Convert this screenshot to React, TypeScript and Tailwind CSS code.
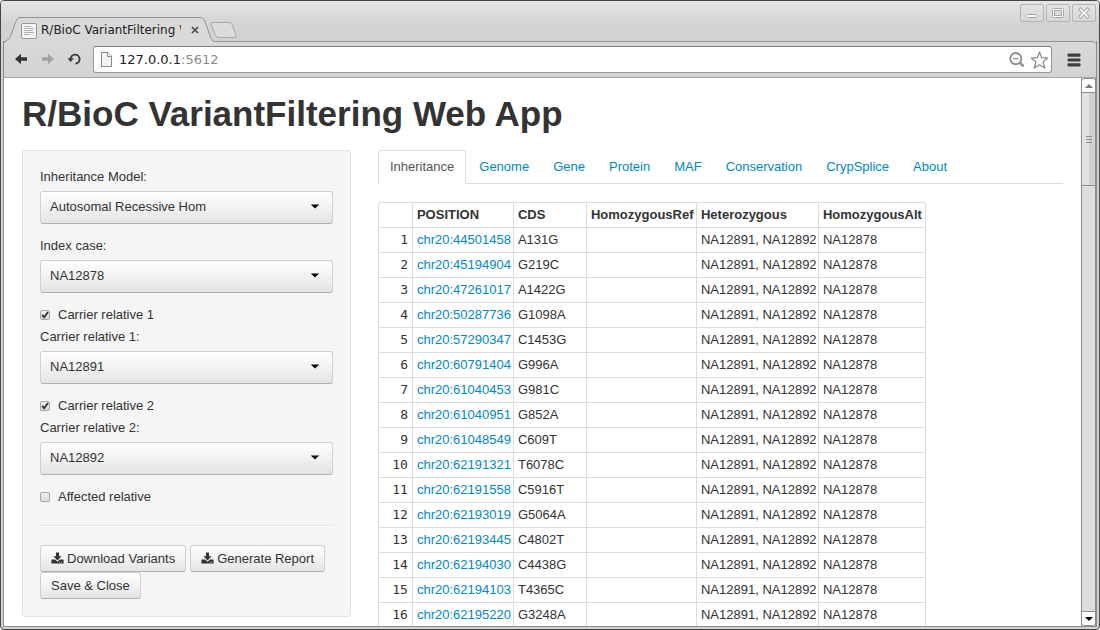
import { useState } from "react";
import type { ReactNode } from "react";

const positions: [string, string][] = [
  ["chr20:44501458", "A131G"],
  ["chr20:45194904", "G219C"],
  ["chr20:47261017", "A1422G"],
  ["chr20:50287736", "G1098A"],
  ["chr20:57290347", "C1453G"],
  ["chr20:60791404", "G996A"],
  ["chr20:61040453", "G981C"],
  ["chr20:61040951", "G852A"],
  ["chr20:61048549", "C609T"],
  ["chr20:62191321", "T6078C"],
  ["chr20:62191558", "C5916T"],
  ["chr20:62193019", "G5064A"],
  ["chr20:62193445", "C4802T"],
  ["chr20:62194030", "C4438G"],
  ["chr20:62194103", "T4365C"],
  ["chr20:62195220", "G3248A"],
];

const tabs = ["Inheritance", "Genome", "Gene", "Protein", "MAF", "Conservation", "CrypSplice", "About"];
const individuals = ["NA12878", "NA12891", "NA12892"];

function WindowButton({ label, children }: { label: string; children: ReactNode }) {
  return (
    <button
      type="button"
      aria-label={label}
      className="flex h-[18px] w-6 items-center justify-center rounded-xs border border-[#b4b4b4] bg-linear-to-b from-[#e4e4e4] to-[#d6d6d6]"
    >
      <svg width="14" height="12" viewBox="0 0 14 12" fill="none">
        {children}
      </svg>
    </button>
  );
}

function TitleBar() {
  return (
    <header className="flex h-10 shrink-0 items-start justify-between bg-linear-to-b from-[#e6e6e6] to-[#d2d2d2] to-60%">
      <div className="flex self-end">
        <div className="relative z-10 -mb-px flex h-[25px] w-[213px] items-center pl-[17px]">
          <svg className="absolute inset-0" width="213" height="26" viewBox="0 0 213 26">
            <path
              d="M0.5 26 C1.5 22.5 5 23.5 6.5 19.5 L11.5 5.5 C12.8 2 14 0.5 17 0.5 L195.5 0.5 C198.5 0.5 200 2 201.2 5 L206 19 C207.5 23 208.5 24.5 212 24.5 L213 26 Z"
              fill="#d9d9d9"
            />
            <path
              d="M0.5 26 C1.5 22.5 5 23.5 6.5 19.5 L11.5 5.5 C12.8 2 14 0.5 17 0.5 L195.5 0.5 C198.5 0.5 200 2 201.2 5 L206 19 C207.5 23 208.5 24.5 212 24.5 H213"
              fill="none"
              stroke="#949494"
            />
          </svg>
          <svg className="relative mt-0.5 shrink-0" width="16" height="16" viewBox="0 0 16 16">
            <rect x="0.5" y="0.5" width="15" height="15" rx="1.5" fill="#f4f4f4" stroke="#989898" />
            <path d="M3 3.5h7M3 5.5h10M3 7.5h9M3 9.5h10M3 11.5h6" stroke="#b4b4b4" />
          </svg>
          <span className="relative ml-1 w-[140px] overflow-hidden font-['DejaVu_Sans',sans-serif] text-[12px] leading-5 whitespace-nowrap text-[#222]">
            R/BioC VariantFiltering Web App
          </span>
          <button type="button" aria-label="Close tab" className="relative ml-2 flex size-3 items-center justify-center">
            <svg width="8" height="8" viewBox="0 0 8 8">
              <path d="M1 1l6 6M7 1l-6 6" stroke="#4c4c4c" strokeWidth="1.7" />
            </svg>
          </button>
        </div>
        <button type="button" aria-label="New tab" className="mt-[5px] -ml-[7px] flex items-start">
          <svg width="28" height="18" viewBox="0 0 28 18">
            <path
              d="M2.5 0.5 H19 Q21 0.5 22 2.5 L26 13 Q26.8 15.5 24.5 15.5 H9 Q6.5 15.5 5.6 13.5 L1.2 3 Q0.2 0.5 2.5 0.5Z"
              fill="#dcdcdc"
              stroke="#a8a8a8"
            />
          </svg>
        </button>
      </div>
      <div className="flex gap-0.5 pt-[3px]">
        <WindowButton label="Minimise">
          <rect x="1.5" y="7.5" width="10" height="3" rx="1" fill="#fff" stroke="#a6a6a6" />
        </WindowButton>
        <WindowButton label="Maximise">
          <rect x="1.5" y="1.5" width="11" height="9" rx="1" fill="#fff" stroke="#a6a6a6" />
          <rect x="3.5" y="3.5" width="7" height="5" fill="#ddd" stroke="#a6a6a6" />
        </WindowButton>
        <WindowButton label="Close">
          <path d="M3.5 2.5l7 7M10.5 2.5l-7 7" stroke="#a6a6a6" strokeWidth="3.6" strokeLinecap="square" />
          <path d="M3.5 2.5l7 7M10.5 2.5l-7 7" stroke="#f6f6f6" strokeWidth="1.8" strokeLinecap="square" />
        </WindowButton>
      </div>
    </header>
  );
}

function Toolbar() {
  return (
    <div className="flex h-[37px] shrink-0 items-center rounded-tr border-t border-b border-t-[#949494] border-b-[#a6a6a6] bg-linear-to-b from-[#d9d9d9] to-[#d3d3d3] pr-[15px] pl-[10px]">
      <button type="button" aria-label="Back">
        <svg width="14" height="14" viewBox="0 0 14 14">
          <path d="M1 6 L7 0.8 V4.3 H13 V7.7 H7 V11.2Z" fill="#333" />
        </svg>
      </button>
      <button type="button" aria-label="Forward" className="ml-[13px]">
        <svg width="14" height="14" viewBox="0 0 14 14">
          <path d="M13 6 L7 0.8 V4.3 H1 V7.7 H7 V11.2Z" fill="#a2a2a2" />
        </svg>
      </button>
      <button type="button" aria-label="Reload" className="ml-[12px]">
        <svg width="14" height="14" viewBox="0 0 14 14">
          <path d="M3.6 6 A4.5 4.5 0 1 1 8.5 10.6" fill="none" stroke="#3a3a3a" strokeWidth="1.9" />
          <path d="M0.4 5.2 H6.8 L3.6 9Z" fill="#3a3a3a" />
        </svg>
      </button>
      <div className="ml-[12px] flex h-[27px] flex-1 items-center rounded-[3px] border border-[#969696] border-t-[#7c7c7c] bg-white pr-0.5 pl-[7px]">
        <svg width="11" height="15" viewBox="0 0 11 15">
          <path d="M0.5 0.5H7L10.5 4V14.5H0.5Z" fill="#f3f3f3" stroke="#8a8a8a" />
          <path d="M6.5 0.5V4.5H10.5" fill="#fff" stroke="#8a8a8a" />
        </svg>
        <p className="ml-[7px] flex-1 font-['DejaVu_Sans',sans-serif] text-[13px] leading-5 text-[#222]">
          127.0.0.1<span className="text-[#8c8c8c]">:5612</span>
        </p>
        <button type="button" aria-label="Zoom">
          <svg width="16" height="16" viewBox="0 0 16 16" fill="none" stroke="#8c8c8c">
            <circle cx="6.8" cy="6.6" r="5.6" strokeWidth="1.8" />
            <path d="M4 6.6h5.6" strokeWidth="1.2" />
            <path d="M10.8 10.6l3.8 3.8" strokeWidth="2.4" />
          </svg>
        </button>
        <button type="button" aria-label="Bookmark this page" className="ml-[5px]">
          <svg width="19" height="18" viewBox="0 0 19 18">
            <path
              d="M9.5 1 L11.6 6.6 L17.8 7 L13 10.9 L14.9 17 L9.5 13.8 L4.1 17 L6 10.9 L1.2 7 L7.4 6.6Z"
              fill="#fff"
              stroke="#858585"
              strokeWidth="1.2"
              strokeLinejoin="round"
            />
          </svg>
        </button>
      </div>
      <button type="button" aria-label="Menu" className="ml-[15px]">
        <svg width="14" height="14" viewBox="0 0 14 14" fill="#3e3e3e">
          <rect x="0.5" y="0.5" width="13" height="3.2" rx="1" />
          <rect x="0.5" y="5.4" width="13" height="3.2" rx="1" />
          <rect x="0.5" y="10.3" width="13" height="3.2" rx="1" />
        </svg>
      </button>
    </div>
  );
}

function Picker({ id, label, value, options }: { id: string; label: string; value: string; options: string[] }) {
  return (
    <div className="mb-3">
      <label htmlFor={id} className="mb-1 block">
        {label}
      </label>
      <div className="relative">
        <select
          id={id}
          defaultValue={value}
          className="block h-[33px] w-full appearance-none rounded-[3px] border border-[#d0d0d0] border-b-[#b0b0b0] bg-linear-to-b from-white to-[#e4e4e4] pr-8 pb-0.5 pl-[9px]"
        >
          {options.map((option) => (
            <option key={option}>{option}</option>
          ))}
        </select>
        <svg className="pointer-events-none absolute top-[13px] right-[13px]" width="10" height="5" viewBox="0 0 10 5">
          <path d="M0.8 0.5h8.4L5 4.6Z" fill="#000" />
        </svg>
      </div>
    </div>
  );
}

function Tick({ label, checked = false }: { label: string; checked?: boolean }) {
  return (
    <label className="mb-0.5 flex items-center gap-2">
      <span className="relative size-[10px]">
        <input
          type="checkbox"
          defaultChecked={checked}
          className="peer block size-[10px] appearance-none rounded-[2px] border border-[#a6a6a6] bg-linear-to-b from-[#eee] to-[#dcdcdc]"
        />
        <svg
          className="pointer-events-none absolute inset-0 hidden peer-checked:block"
          width="10"
          height="10"
          viewBox="0 0 10 10"
        >
          <path d="M2.2 4.8 L4.2 7.2 L8 2" fill="none" stroke="#333" strokeWidth="1.9" />
        </svg>
      </span>
      {label}
    </label>
  );
}

function DownloadIcon() {
  return (
    <svg className="mb-0.5" width="13" height="12" viewBox="0 0 13 12" fill="#333">
      <path d="M5 0.5h3v3.7h2.6L6.5 8.4 2.4 4.2H5Z" />
      <path
        fillRule="evenodd"
        d="M1 7.6h3l2.5 2.2L9 7.6h3q0.6 0 0.6 0.6v2.7q0 0.6-0.6 0.6H1q-0.6 0-0.6-0.6V8.2q0-0.6 0.6-0.6ZM8.3 9.8v0.8h0.9v-0.8ZM10.2 9.8v0.8h0.9v-0.8Z"
      />
    </svg>
  );
}

function ActionButton({ icon, children }: { icon?: boolean; children: ReactNode }) {
  return (
    <button
      type="button"
      className="flex h-[27px] items-center gap-[3px] rounded-[3px] border border-[#d0d0d0] border-b-[#b0b0b0] bg-linear-to-b from-white to-[#e5e5e5] px-2.5 whitespace-nowrap"
    >
      {icon && <DownloadIcon />}
      {children}
    </button>
  );
}

function Sidebar() {
  return (
    <form className="w-[31.6%] shrink-0 rounded-[3px] border border-[#e3e3e3] bg-[#f5f5f5] px-[17px] pt-4 pb-[17px]">
      <Picker
        id="model"
        label="Inheritance Model:"
        value="Autosomal Recessive Hom"
        options={["Autosomal Recessive Hom", "Autosomal Recessive Het", "Autosomal Dominant", "De Novo"]}
      />
      <Picker id="index-case" label="Index case:" value="NA12878" options={individuals} />
      <Tick label="Carrier relative 1" checked />
      <Picker id="carrier-1" label="Carrier relative 1:" value="NA12891" options={individuals} />
      <Tick label="Carrier relative 2" checked />
      <Picker id="carrier-2" label="Carrier relative 2:" value="NA12892" options={individuals} />
      <Tick label="Affected relative" />
      <hr className="my-[18px] h-0.5 border-t border-b border-t-[#e9e9e9] border-b-white" />
      <div className="flex flex-wrap gap-x-1">
        <ActionButton icon>Download Variants</ActionButton>
        <ActionButton icon>Generate Report</ActionButton>
        <ActionButton>Save &amp; Close</ActionButton>
      </div>
    </form>
  );
}

function VariantTable() {
  const head = "border-t border-l border-[#ddd] px-1 py-0.5 text-left font-bold";
  const cell = "border-t border-l border-[#ddd] px-1 py-0.5";
  return (
    <table className="mt-[18px] w-[548px] table-fixed border-separate border-spacing-0 rounded-[3px] border-r border-[#ddd] whitespace-nowrap">
      <colgroup>
        <col className="w-[34px]" />
        <col className="w-[101px]" />
        <col className="w-[73px]" />
        <col className="w-[110px]" />
        <col className="w-[122px]" />
        <col className="w-[107px]" />
      </colgroup>
      <thead>
        <tr className="h-[25px]">
          <th className="rounded-tl-[3px] border-t border-l border-[#ddd]" />
          <th className={head}>POSITION</th>
          <th className={head}>CDS</th>
          <th className={head}>HomozygousRef</th>
          <th className={head}>Heterozygous</th>
          <th className="rounded-tr-[3px] border-t border-l border-[#ddd] px-1 py-0.5 text-left font-bold">HomozygousAlt</th>
        </tr>
      </thead>
      <tbody>
        {positions.map(([position, cds], i) => (
          <tr key={position} className="h-[25px]">
            <td className="border-t border-l border-[#ddd] px-1 py-0.5 text-right font-['DejaVu_Sans_Mono',monospace]">
              {i + 1}
            </td>
            <td className={cell}>
              <a href="#variant" className="text-[#0088cc]">
                {position}
              </a>
            </td>
            <td className={cell}>{cds}</td>
            <td className={cell} />
            <td className={cell}>NA12891, NA12892</td>
            <td className={cell}>NA12878</td>
          </tr>
        ))}
      </tbody>
    </table>
  );
}

function Results() {
  const [active, setActive] = useState("Inheritance");
  return (
    <section className="min-w-0 flex-1">
      <nav className="flex gap-0.5 border-b border-[#ddd]">
        {tabs.map((tab) => (
          <a
            key={tab}
            href="#results"
            onClick={() => setActive(tab)}
            className={
              tab === active
                ? "-mb-px rounded-t-[3px] border border-[#ddd] border-b-white bg-white px-[11px] py-[6px] text-[#555]"
                : "-mb-px border border-transparent px-2.5 py-[6px] text-[#0088cc]"
            }
          >
            {tab}
          </a>
        ))}
      </nav>
      <VariantTable />
    </section>
  );
}

function ScrollBar() {
  return (
    <div className="flex w-[15px] shrink-0 flex-col border-r border-l border-[#8c8c8c] bg-[#dedede]" aria-hidden="true">
      <div className="flex h-[15px] items-center justify-center rounded-t-[3px] border-t border-b border-[#8c8c8c] bg-white">
        <svg width="8" height="4" viewBox="0 0 8 4">
          <path d="M4 0L8 4H0Z" fill="#777" />
        </svg>
      </div>
      <div className="flex h-[93px] items-center justify-center border-b border-[#8c8c8c] bg-linear-to-r from-[#e2e2e2] from-50% to-[#d2d2d2] to-50%">
        <svg width="6" height="7" viewBox="0 0 6 7">
          <path d="M0 0.5h6M0 3.5h6M0 6.5h6" stroke="#8c8c8c" />
        </svg>
      </div>
      <div className="flex-1" />
      <div className="flex h-[15px] items-center justify-center rounded-b-[3px] border-t border-b border-[#8c8c8c] bg-white">
        <svg width="8" height="4" viewBox="0 0 8 4">
          <path d="M4 4L0 0H8Z" fill="#000" />
        </svg>
      </div>
    </div>
  );
}

export default function App() {
  return (
    <div className="flex h-screen flex-col overflow-hidden rounded-[4px] border border-[#454545] bg-[#d2d2d2] font-['Liberation_Sans',Arial,sans-serif] text-[13px] leading-5 text-[#333]">
      <div className="flex min-h-0 flex-1 flex-col px-0.5 pb-0.5">
        <div className="-mx-0.5 bg-linear-to-b from-[#e6e6e6] to-[#d2d2d2] to-60% px-[3px]">
          <TitleBar />
        </div>
        <div className="flex min-h-0 flex-1 flex-col border-r border-b border-l border-[#8c8c8c]">
          <Toolbar />
          <div className="flex min-h-0 flex-1">
            <main className="min-w-0 flex-1 overflow-hidden bg-white px-[18px] pt-4">
              <h1 className="text-[35px] leading-10 font-bold">R/BioC VariantFiltering Web App</h1>
              <div className="mt-4 flex items-start gap-[27px]">
                <Sidebar />
                <Results />
              </div>
            </main>
            <ScrollBar />
          </div>
        </div>
      </div>
    </div>
  );
}
